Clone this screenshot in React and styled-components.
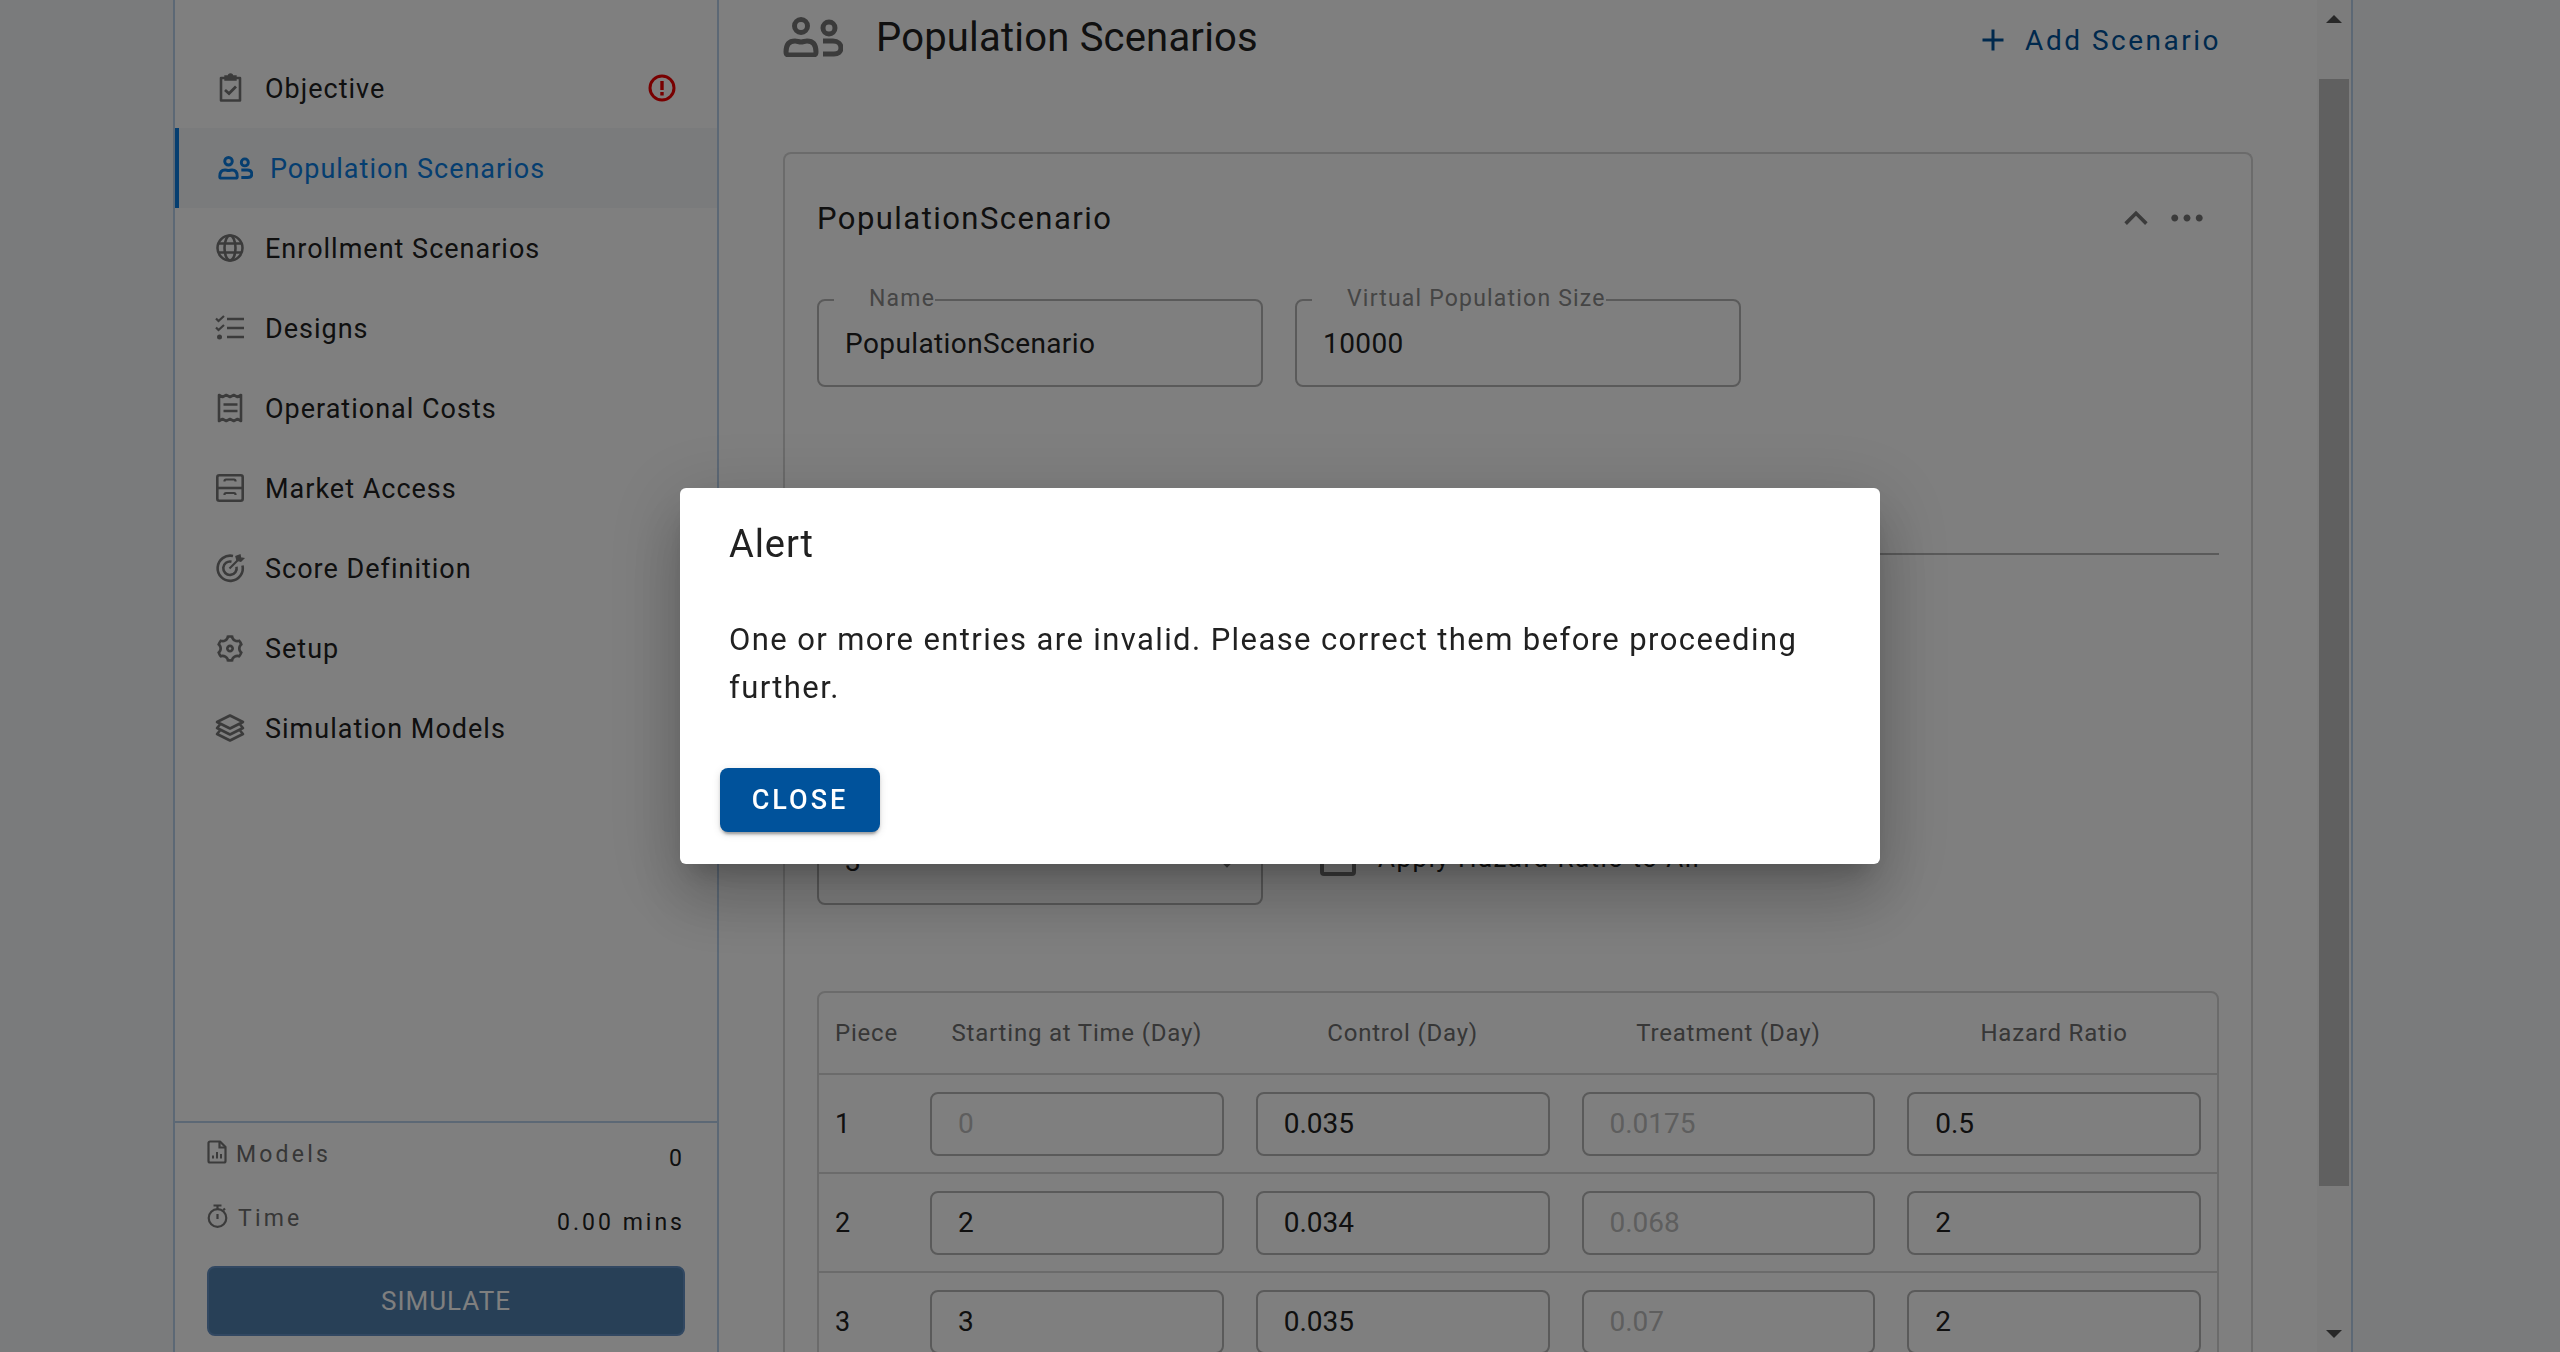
import React from "react";
import styled, { createGlobalStyle } from "styled-components";
import { RiSettings3Line, RiAddLine, RiArrowUpSLine, RiMoreFill, RiArrowDownSFill } from "react-icons/ri";

const GlobalStyle = createGlobalStyle`
  html, body {
    margin: 0;
    height: 100%;
    overflow: hidden;
    background: #f4f6f8;
  }
  * {
    box-sizing: border-box;
  }
  body {
    font-family: Roboto, "Liberation Sans", sans-serif;
    color: #212121;
  }
`;

const activeBlue = "#0a7ce0";

const PeopleIcon = ({ size = 35, color = "currentColor" }) => (
  <svg width={size} height={size * 0.683} viewBox="0 0 60 41" fill="none" stroke={color} strokeWidth="5">
    <circle cx="18" cy="9" r="6.5" />
    <path d="M3 35c0-7 3-11 9-11 2 0 4 1 6 1s4-1 6-1c6 0 9 4 9 11 0 2-1 3-3 3H6c-2 0-3-1-3-3z" />
    <circle cx="46" cy="11" r="6" />
    <path d="M40 24h10c5 0 8 3 8 7s-3 6-7 6H40" />
  </svg>
);

const NavSvg = ({ children }) => (
  <svg width="32" height="32" viewBox="0 0 32 32" fill="none" stroke="currentColor" strokeWidth="2.6">
    {children}
  </svg>
);

const ClipboardIcon = () => (
  <NavSvg>
    <path d="M11 6H7v22.500h19V6h-4" strokeLinejoin="round" />
    <path d="M11 4h3.500a2 2 0 0 1 4 0H22v4H11z" fill="currentColor" strokeWidth="1.400" />
    <path d="M11 18l4 3.500 7-7" strokeWidth="2.800" />
  </NavSvg>
);

const GlobeIcon = () => (
  <NavSvg>
    <circle cx="16" cy="16" r="12.500" />
    <ellipse cx="16" cy="16" rx="5.500" ry="12.500" />
    <path d="M4.500 11.500h23M4.500 20.500h23" />
  </NavSvg>
);

const ChecklistIcon = () => (
  <NavSvg>
    <path d="M13 7h17M13 16h17M13 25h17" />
    <path d="M2 6.500l2.500 2.500L10 4M2 15.500l2.500 2.500L10 13" strokeWidth="2.200" />
    <circle cx="5.500" cy="25" r="2.500" fill="currentColor" stroke="none" />
  </NavSvg>
);

const ReceiptIcon = () => (
  <NavSvg>
    <path d="M5 3l3.500 2 3.750-2 3.750 2 3.750-2 3.750 2L27 3v26l-3.500-2-3.750 2-3.750-2-3.750 2-3.750-2L5 29z" strokeLinejoin="round" />
    <path d="M9.500 12.500h14M9.500 19h14" />
  </NavSvg>
);

const DrawerIcon = () => (
  <NavSvg>
    <rect x="3.300" y="3.300" width="25.400" height="25.400" rx="2" />
    <path d="M3.300 16h25.400" />
    <path d="M10.500 9.500V9a1.500 1.500 0 0 1 1.500-1.500h8A1.500 1.500 0 0 1 21.500 9v.5M10.500 23v-.5a1.500 1.500 0 0 1 1.500-1.500h8a1.500 1.500 0 0 1 1.500 1.500v.5" strokeWidth="2.200" />
  </NavSvg>
);

const TargetIcon = () => (
  <NavSvg>
    <path d="M19 4a12.600 12.600 0 1 0 9.500 9.500" />
    <path d="M17.500 9.700a6.700 6.700 0 1 0 5 5" />
    <path d="M15.500 16.500L24 8" strokeWidth="2.200" />
    <path d="M22 4.500l1 3.800 3.800 1 2.800-2.800-3-.6-.6-3z" fill="currentColor" strokeWidth="1.400" />
  </NavSvg>
);

const StackIcon = () => (
  <NavSvg>
    <path d="M16 3.500L29 10l-13 6.500L3 10z" strokeLinejoin="round" />
    <path d="M6 12.500L3 16l13 6.500L29 16l-3-3.500" strokeLinejoin="round" />
    <path d="M6 18.500L3 22l13 6.500L29 22l-3-3.500" strokeLinejoin="round" />
  </NavSvg>
);

const AlertIcon = () => (
  <svg width="30" height="30" viewBox="0 0 30 30" fill="none">
    <circle cx="15" cy="15" r="12" stroke="#f00000" strokeWidth="3" />
    <path d="M13.300 8h3.400v9h-3.400zM13.300 19h3.400v3.400h-3.400z" fill="#f00000" />
  </svg>
);

const FileChartIcon = () => (
  <svg width="20" height="24" viewBox="0 0 20 24" fill="none" stroke="currentColor" strokeWidth="2.200">
    <path d="M13 1.500H3A1.500 1.500 0 0 0 1.500 3v18A1.500 1.500 0 0 0 3 22.500h14a1.500 1.500 0 0 0 1.500-1.500V7z" strokeLinejoin="round" />
    <path d="M12.500 2v5.500H18" />
    <path d="M6 18.500v-3M10 18.500v-6.500M14 18.500v-4.500" strokeWidth="2" />
  </svg>
);

const TimerIcon = () => (
  <svg width="22" height="24" viewBox="0 0 22 24" fill="none" stroke="currentColor" strokeWidth="2.200">
    <circle cx="10.500" cy="14" r="8.800" />
    <path d="M6.500 1.500h8M10.500 1.500v4M10.500 10v5M18 4.500l-1.800 1.800" />
  </svg>
);

const navItems = [
  { label: "Objective", icon: <ClipboardIcon />, alert: true },
  { label: "Population Scenarios", icon: <PeopleIcon color={activeBlue} />, active: true },
  { label: "Enrollment Scenarios", icon: <GlobeIcon /> },
  { label: "Designs", icon: <ChecklistIcon /> },
  { label: "Operational Costs", icon: <ReceiptIcon /> },
  { label: "Market Access", icon: <DrawerIcon /> },
  { label: "Score Definition", icon: <TargetIcon /> },
  { label: "Setup", icon: <RiSettings3Line size={33} /> },
  { label: "Simulation Models", icon: <StackIcon /> },
];

const rows = [
  { piece: 1, start: "0", control: "0.035", treatment: "0.0175", ratio: "0.5", locked: true },
  { piece: 2, start: "2", control: "0.034", treatment: "0.068", ratio: "2" },
  { piece: 3, start: "3", control: "0.035", treatment: "0.07", ratio: "2" },
];

const App = () => {
  return (
    <>
      <GlobalStyle />
      <Page>
        <Frame>
          <Sidebar>
            <NavList>
              {navItems.map((item) => (
                <NavItem key={item.label} $active={item.active}>
                  <NavIcon $active={item.active}>{item.icon}</NavIcon>
                  <NavLabel>{item.label}</NavLabel>
                  {item.alert && <AlertSlot><AlertIcon /></AlertSlot>}
                </NavItem>
              ))}
            </NavList>
            <SideFooter>
              <StatRow>
                <StatLabel>
                  <FileChartIcon />
                  <span>Models</span>
                </StatLabel>
                <StatValue>0</StatValue>
              </StatRow>
              <StatRow>
                <StatLabel>
                  <TimerIcon />
                  <span>Time</span>
                </StatLabel>
                <StatValue>0.00 mins</StatValue>
              </StatRow>
              <SimulateButton>SIMULATE</SimulateButton>
            </SideFooter>
          </Sidebar>

          <Main>
            <Content>
              <PageHeader>
                <PageTitle>
                  <PeopleIcon size={60} color="#777" />
                  <h1>Population Scenarios</h1>
                </PageTitle>
                <AddButton>
                  <RiAddLine size={36} />
                  Add Scenario
                </AddButton>
              </PageHeader>

              <Card>
                <CardHeader>
                  <CardTitle>PopulationScenario</CardTitle>
                  <CardActions>
                    <RiArrowUpSLine size={44} />
                    <RiMoreFill size={42} />
                  </CardActions>
                </CardHeader>

                <FieldRow>
                  <Field>
                    <FieldLabel>Name</FieldLabel>
                    PopulationScenario
                  </Field>
                  <Field>
                    <FieldLabel>Virtual Population Size</FieldLabel>
                    10000
                  </Field>
                </FieldRow>

                <Divider />

                <OptionRow>
                  <Field>
                    <FieldLabel>Number of Pieces</FieldLabel>
                    3
                    <SelectArrow><RiArrowDownSFill size={28} /></SelectArrow>
                  </Field>
                  <CheckRow>
                    <CheckBox />
                    Apply Hazard Ratio to All
                  </CheckRow>
                </OptionRow>

                <Table>
                  <HeadRow>
                    <HeadCell $left>Piece</HeadCell>
                    <HeadCell>Starting at Time (Day)</HeadCell>
                    <HeadCell>Control (Day)</HeadCell>
                    <HeadCell>Treatment (Day)</HeadCell>
                    <HeadCell>Hazard Ratio</HeadCell>
                  </HeadRow>
                  {rows.map((row) => (
                    <BodyRow key={row.piece}>
                      <PieceCell>{row.piece}</PieceCell>
                      <CellInput $disabled={row.locked}>{row.start}</CellInput>
                      <CellInput>{row.control}</CellInput>
                      <CellInput $disabled>{row.treatment}</CellInput>
                      <CellInput>{row.ratio}</CellInput>
                    </BodyRow>
                  ))}
                </Table>
              </Card>
            </Content>

            <ScrollTrack>
              <ScrollArrow $up />
              <ScrollThumb />
              <ScrollArrow />
            </ScrollTrack>
          </Main>
        </Frame>

        <Overlay>
          <Dialog>
            <DialogTitle>Alert</DialogTitle>
            <DialogBody>
              One or more entries are invalid. Please correct them before proceeding further.
            </DialogBody>
            <DialogActions>
              <CloseButton>CLOSE</CloseButton>
            </DialogActions>
          </Dialog>
        </Overlay>
      </Page>
    </>
  );
};

const Page = styled.div`
  height: 100vh;
  padding-left: 173px;
  overflow: hidden;
`;

const Frame = styled.div`
  display: flex;
  width: 2180px;
  height: 100%;
  background: #fff;
  border-left: 2px solid #b9d0ea;
  border-right: 2px solid #b9d0ea;
`;

const Sidebar = styled.aside`
  display: flex;
  flex-direction: column;
  flex: 0 0 544px;
  border-right: 2px solid #b9d0ea;
`;

const NavList = styled.nav`
  flex: 1;
  padding-top: 48px;
`;

const NavItem = styled.div`
  display: flex;
  align-items: center;
  height: 80px;
  padding-left: 39px;
  padding-right: 40px;
  gap: ${(p) => (p.$active ? "17px" : "19px")};
  background: ${(p) => (p.$active ? "#f4f6f8" : "transparent")};
  border-left: ${(p) => (p.$active ? `4px solid ${activeBlue}` : "0")};
  color: ${(p) => (p.$active ? activeBlue : "#212121")};
`;

const NavIcon = styled.span`
  display: flex;
  align-items: center;
  justify-content: center;
  flex: 0 0 auto;
  width: ${(p) => (p.$active ? "35px" : "32px")};
  height: 32px;
  color: ${(p) => (p.$active ? activeBlue : "#777")};
`;

const NavLabel = styled.span`
  flex: 1;
  font-size: 27px;
  letter-spacing: 1px;
  position: relative;
  top: 1px;
`;

const AlertSlot = styled.span`
  display: flex;
`;

const SideFooter = styled.div`
  display: flex;
  flex-direction: column;
  height: 231px;
  padding: 0 32px;
  border-top: 2px solid #b9d0ea;
`;

const StatRow = styled.div`
  display: flex;
  justify-content: space-between;
  height: 64px;
  padding-top: 18px;
`;

const StatLabel = styled.div`
  display: flex;
  gap: 9px;
  align-items: flex-start;
  font-size: 23px;
  letter-spacing: 3.2px;
  color: #6e6e6e;

  svg {
    color: #777;
    margin-top: -1px;
  }
`;

const StatValue = styled.div`
  font-size: 23px;
  letter-spacing: 3px;
  margin-top: 4px;
`;

const SimulateButton = styled.button`
  height: 70px;
  margin-top: 15px;
  padding: 0;
  border: 2px solid #6491c5;
  border-radius: 8px;
  background: #5080ae;
  color: #fff;
  font-family: inherit;
  font-size: 26px;
  letter-spacing: 1px;
`;

const Main = styled.main`
  flex: 1;
  display: flex;
  min-width: 0;
`;

const Content = styled.div`
  flex: 1;
  min-width: 0;
  padding-left: 64px;
  padding-right: 64px;
  overflow: hidden;
`;

const PageHeader = styled.header`
  display: flex;
  justify-content: space-between;
  align-items: center;
  height: 74px;
  padding-right: 32px;
  margin-bottom: 78px;
`;

const PageTitle = styled.div`
  display: flex;
  align-items: center;
  gap: 33px;

  h1 {
    margin: 0;
    font-size: 40px;
    font-weight: 400;
    letter-spacing: 0.2px;
  }
`;

const AddButton = styled.div`
  display: flex;
  align-items: center;
  gap: 14px;
  margin-top: 6px;
  color: #00529b;
  font-size: 28px;
  letter-spacing: 2.5px;
`;

const Card = styled.section`
  border: 2px solid #d6d6d6;
  border-bottom: 0;
  border-radius: 8px 8px 0 0;
  padding: 0 32px;
  height: 1400px;
`;

const CardHeader = styled.div`
  display: flex;
  justify-content: space-between;
  align-items: center;
  height: 128px;
  margin-bottom: 17px;
`;

const CardTitle = styled.div`
  font-size: 31px;
  letter-spacing: 1.45px;
`;

const CardActions = styled.div`
  display: flex;
  align-items: center;
  gap: 8px;
  color: #777;
  margin-right: 11px;
`;

const FieldRow = styled.div`
  display: flex;
  gap: 32px;
`;

const Field = styled.div`
  position: relative;
  display: flex;
  align-items: center;
  width: 446px;
  height: 88px;
  padding-left: 26px;
  border: 2px solid #b4b4b4;
  border-radius: 8px;
  font-size: 28px;
  letter-spacing: 0.4px;
`;

const FieldLabel = styled.span`
  position: absolute;
  top: -16px;
  left: 15px;
  padding-left: 35px;
  background: #fff;
  font-size: 23px;
  letter-spacing: 1.2px;
  line-height: 28px;
  color: #8a8a8a;
`;

const SelectArrow = styled.span`
  position: absolute;
  right: 20px;
  top: 30px;
  display: flex;
  color: #777;
`;

const Divider = styled.hr`
  margin: 166px 0 0;
  border: 0;
  border-top: 2px solid #b4b4b4;
`;

const OptionRow = styled.div`
  display: flex;
  gap: 57px;
  margin-top: 262px;
`;

const CheckRow = styled.div`
  display: flex;
  align-items: center;
  gap: 22px;
  margin-top: -7px;
  font-size: 26px;
  letter-spacing: 1.45px;
  color: #212121;
`;

const CheckBox = styled.span`
  width: 36px;
  height: 36px;
  border: 4px solid #777;
  border-radius: 4px;
`;

const Table = styled.div`
  margin-top: 86px;
  border: 2px solid #d6d6d6;
  border-radius: 8px 8px 0 0;
  background: #fff;
`;

const columns = "95px repeat(4, 1fr)";

const HeadRow = styled.div`
  display: grid;
  grid-template-columns: ${columns};
  align-items: center;
  height: 82px;
  border-bottom: 2px solid #d6d6d6;
`;

const HeadCell = styled.div`
  font-size: 24px;
  font-weight: 400;
  letter-spacing: 0.8px;
  color: #6e6e6e;
  text-align: ${(p) => (p.$left ? "left" : "center")};
  padding-left: ${(p) => (p.$left ? "16px" : "0")};
`;

const BodyRow = styled.div`
  display: grid;
  grid-template-columns: ${columns};
  align-items: center;
  height: 99px;
  border-bottom: 2px solid #d6d6d6;
`;

const PieceCell = styled.div`
  padding-left: 16px;
  font-size: 27px;
`;

const CellInput = styled.div`
  display: flex;
  align-items: center;
  height: 64px;
  margin: 0 16px;
  padding-left: 26px;
  border: 2px solid #b4b4b4;
  border-radius: 8px;
  font-size: 28px;
  color: ${(p) => (p.$disabled ? "#bdbdbd" : "#212121")};
`;

const ScrollTrack = styled.div`
  display: flex;
  flex-direction: column;
  align-items: center;
  flex: 0 0 34px;
  background: #f8f8f8;
`;

const ScrollArrow = styled.span`
  flex: 0 0 auto;
  width: 0;
  height: 0;
  margin: ${(p) => (p.$up ? "15px 0 56px" : "auto 0 14px")};
  border-left: 8px solid transparent;
  border-right: 8px solid transparent;
  ${(p) => (p.$up ? "border-bottom: 8px solid #505050;" : "border-top: 8px solid #505050;")}
`;

const ScrollThumb = styled.span`
  width: 30px;
  height: 1107px;
  background: #c1c1c1;
`;

const Overlay = styled.div`
  position: fixed;
  inset: 0;
  display: flex;
  align-items: center;
  justify-content: center;
  background: rgba(0, 0, 0, 0.5);
`;

const Dialog = styled.div`
  width: 1200px;
  height: 376px;
  background: #fff;
  border-radius: 6px;
  box-shadow: 0 18px 24px -11px rgba(0, 0, 0, 0.2), 0 38px 61px 5px rgba(0, 0, 0, 0.14),
    0 14px 74px 13px rgba(0, 0, 0, 0.12);
`;

const DialogTitle = styled.h2`
  margin: 0;
  padding: 33px 49px 0;
  font-size: 38px;
  line-height: 46px;
  font-weight: 400;
  letter-spacing: 0.9px;
`;

const DialogBody = styled.p`
  margin: 0;
  padding: 49px 49px 0;
  font-size: 31px;
  line-height: 48px;
  letter-spacing: 1.4px;
`;

const DialogActions = styled.div`
  display: flex;
  padding: 56px 40px 0;
`;

const CloseButton = styled.button`
  width: 160px;
  height: 64px;
  padding: 0;
  border: 0;
  border-radius: 8px;
  background: #00529b;
  color: #fff;
  font-family: inherit;
  font-size: 27px;
  font-weight: 500;
  letter-spacing: 3px;
  box-shadow: 0 5px 2px -3px rgba(0, 0, 0, 0.2), 0 3px 3px 0 rgba(0, 0, 0, 0.14),
    0 2px 8px 0 rgba(0, 0, 0, 0.12);
`;

export default App;
